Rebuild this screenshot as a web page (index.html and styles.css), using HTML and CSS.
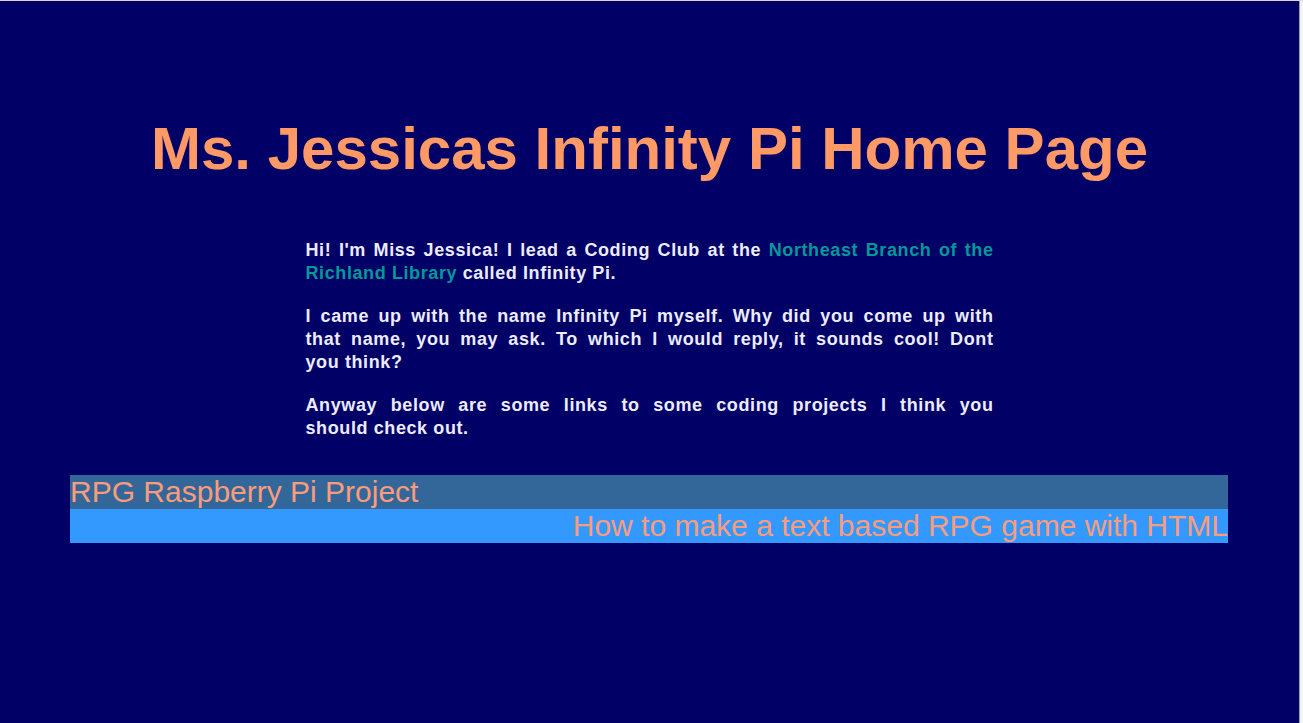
FILE: index.html
```html
<!DOCTYPE html>
<html>
<head>
<meta charset="utf-8">
<title>Ms. Jessicas Infinity Pi Home Page</title>
<link rel="stylesheet" href="styles.css">
</head>
<body>
<div class="frame">
  <main class="page">
    <h1 class="title">Ms. Jessicas Infinity Pi Home Page</h1>
    <section class="intro">
      <p><span class="line">Hi! I'm Miss Jessica! I lead a Coding Club at the <a class="lib" href="#">Northeast Branch of the</a></span><a class="lib" href="#">Richland Library</a> called Infinity Pi.</p>
      <p><span class="line">I came up with the name Infinity Pi myself. Why did you come up with</span><span class="line">that name, you may ask. To which I would reply, it sounds cool! Dont</span>you think?</p>
      <p><span class="line">Anyway below are some links to some coding projects I think you</span>should check out.</p>
    </section>
    <nav class="links">
      <a class="row row-left" href="#">RPG Raspberry Pi Project</a>
      <a class="row row-right" href="#">How to make a text based RPG game with HTML</a>
    </nav>
  </main>
  <div class="edge"></div>
</div>
</body>
</html>
```
FILE: styles.css
```css
html, body {
  margin: 0;
  padding: 0;
  background: #ffffff;
}
body {
  font-family: "Liberation Sans", Arial, sans-serif;
  overflow: hidden;
}
.frame {
  display: flex;
  height: 723px;
  border-top: 1px solid #d8d8e0;
  box-sizing: border-box;
}
.page {
  width: 1300px;
  flex: none;
  background: #000066;
  border-right: 1px solid #9a9aa8;
  box-sizing: border-box;
  padding-top: 112px;
}
.edge {
  flex: 1;
  background: #f4f4f4;
}
.title {
  margin: 0;
  text-align: center;
  color: #ff9966;
  font-size: 60px;
  font-weight: bold;
  line-height: 72px;
}
.intro {
  width: 688px;
  margin: 54px auto 0;
  color: #ececff;
  font-weight: bold;
  font-size: 18px;
  letter-spacing: 0.6px;
  line-height: 23px;
  text-align: justify;
}
.intro p {
  margin: 0 0 20px;
}
.intro .line {
  display: block;
  text-align: justify;
  text-align-last: justify;
}
.lib {
  color: #009999;
  text-decoration: none;
}
.links {
  display: flex;
  flex-direction: column;
  margin: 35px 71px 0 70px;
}
.row {
  display: block;
  height: 34px;
  line-height: 34px;
  font-size: 30px;
  color: #fa9c7c;
  text-decoration: none;
}
.row-left {
  background: #336699;
  text-align: left;
}
.row-right {
  background: #3399ff;
  text-align: right;
}
```
